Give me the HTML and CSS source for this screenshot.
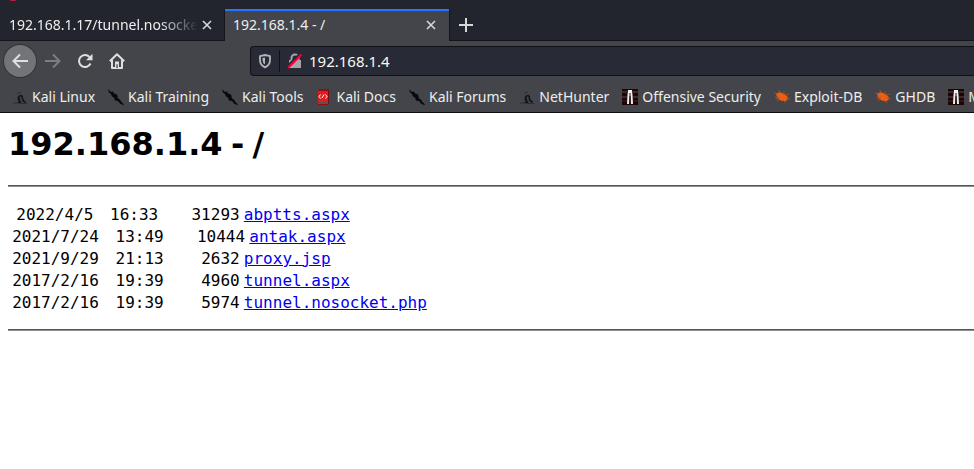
FILE: index.html
```html
<!DOCTYPE html>
<html lang="en">
<head>
<meta charset="utf-8">
<title>192.168.1.4 - /</title>
<link rel="stylesheet" href="styles.css">
</head>
<body>
<svg class="defs" aria-hidden="true">
  <symbol id="close" viewBox="0 0 10 10"><path d="M1 1l8 8M9 1L1 9" fill="none" stroke="#d6d7d9" stroke-width="1.6"/></symbol>
  <symbol id="kali" viewBox="0 0 16 16">
    <path d="M4 14q2-1 3-1c-2-2-2-5 0-6.500q3-2 4 1 0 4 3 5l-.5 1.500q-4-1-4-5.500-.5-2-1.500-.5-1 2 1.500 5.500l-1 1z" fill="#121417"/>
    <path d="M5 5q2-2 4-2M1 15q2-1.500 4-1.500M9 14.500h6" fill="none" stroke="#2b2d31" stroke-width="1"/>
  </symbol>
  <symbol id="blade" viewBox="0 0 16 16">
    <path d="M0 0l3 3 2-.5 1 2 3 1 1 4 2 1 1 2 3 3-1 .5-3-1.500-2-2.500-3-.5-1-3-2-1-1-2.500-2-1.500z" fill="#08090a"/>
  </symbol>
  <symbol id="docs" viewBox="0 0 16 16">
    <path d="M2 2l1-2h10v13l-1 3H2z" fill="#8d1113"/><path d="M2 2h10v11H2z" fill="#e41b1c"/><path d="M2 14l1-1h9v2H2z" fill="#555"/><path d="M13 0v13l-1 3V2z" fill="#701014"/>
    <path d="M4.500 5.500L3 7.500l1.500 2M9.500 5.500l1.500 2-1.500 2M6 9l2-3.500" fill="none" stroke="#fff"/>
  </symbol>
  <symbol id="offsec" viewBox="0 0 16 16">
    <path d="M0 0h16v16H0z" fill="#1b0507"/><path d="M0 3h5M11 3h5M0 8h5M11 8h5" stroke="#5b4c4e" stroke-width="1"/><path d="M0 12h5M11 12h5" stroke="#3b0d12" stroke-width="2"/>
    <path d="M6 1h4l.5 5 .5 9H9l-.5-8h-1L7 15H5l.500-9z" fill="#eee"/><path d="M7.500 4h1v11h-1z" fill="#201315"/>
  </symbol>
  <symbol id="bug" viewBox="0 0 16 16">
    <path d="M2 5q3-3 6-1 5 2 6 5-1 4-5 3Q4 12 2 5z" fill="#ec5f12"/><path d="M0 4l4 1M1 8l4 1M3 12l3-2M5 1l1 3M10 2v4M11 6l4-1M12 9l4 1M9 11l3 3M2 10l4-2" fill="none" stroke="#ad5125" stroke-width=".8"/>
  </symbol>
</svg>

<header class="chrome">
  <div class="tabstrip">
    <div class="tab">
      <button class="tab-title fade" type="button">192.168.1.17/tunnel.nosocket</button>
      <button class="close" type="button" aria-label="Close tab"><svg width="10" height="10"><use href="#close"/></svg></button>
    </div>
    <div class="tab active">
      <button class="tab-title" type="button">192.168.1.4 - /</button>
      <button class="close" type="button" aria-label="Close tab"><svg width="10" height="10"><use href="#close"/></svg></button>
    </div>
    <button class="newtab" type="button" aria-label="New tab"><svg width="14" height="14" viewBox="0 0 14 14"><path d="M7 0v14M0 7h14" stroke="#d6d7d9" stroke-width="2"/></svg></button>
    <svg class="notch" width="8" height="2" viewBox="0 0 8 2"><ellipse cx="4" cy="-1" rx="4" ry="2" fill="#c51f45"/></svg>
  </div>

  <div class="toolbar">
    <button class="tool back" type="button" aria-label="Back"><svg width="16" height="16" viewBox="0 0 16 16"><path d="M16 8H1.500M8 1.500L1.500 8 8 14.500" fill="none" stroke="#dedfe0" stroke-width="2"/></svg></button>
    <button class="tool" type="button" aria-label="Forward" disabled><svg width="16" height="16" viewBox="0 0 16 16"><path d="M0 8h14.500M8 1.500L14.500 8 8 14.500" fill="none" stroke="#7b7d81" stroke-width="2"/></svg></button>
    <button class="tool" type="button" aria-label="Reload"><svg width="16" height="16" viewBox="0 0 16 16"><path d="M12.500 4A6 6 0 1 0 13.500 10.500" fill="none" stroke="#dedfe0" stroke-width="2"/><path d="M15.500.8v6.400H9z" fill="#dedfe0"/></svg></button>
    <button class="tool" type="button" aria-label="Home"><svg width="16" height="16" viewBox="0 0 16 16"><path d="M.8 8.300L8 1.200l7.200 7.100M3 7v8h10V7" fill="none" stroke="#dedfe0" stroke-width="2" stroke-linejoin="round"/><path d="M6 8.500h4V14H6z" fill="#dedfe0"/><path d="M7.400 11.300h1.300V15H7.400z" fill="#43454b"/></svg></button>
    <div class="urlbar">
      <svg width="14" height="16" viewBox="0 0 14 16"><path d="M7 2L12 3.200V7c0 3.600-2 6-5 7.300C4 13 2 10.600 2 7V3.200z" fill="none" stroke="#b3b4b8" stroke-width="1.800" stroke-linejoin="round"/><path d="M7 4.500v7Q4.500 10 4.500 7V5z" fill="#b3b4b8"/></svg>
      <span class="divider"></span>
      <svg width="16" height="16" viewBox="0 0 16 16"><path d="M2 7h12v8H2z" fill="#a5a6aa"/><path d="M4.500 8V5a3.500 3.500 0 0 1 7 0v3" fill="none" stroke="#a5a6aa" stroke-width="2"/><path d="M.5 13L13 .5" stroke="#282a36" stroke-width="2"/><path d="M1 15L14.500 1.500" stroke="#f5003d" stroke-width="2"/></svg>
      <input type="text" value="192.168.1.4" aria-label="Address" spellcheck="false">
    </div>
  </div>

  <nav class="bookmarks" aria-label="Bookmarks">
    <a href="#"><svg><use href="#kali"/></svg>Kali Linux</a>
    <a href="#"><svg><use href="#blade"/></svg>Kali Training</a>
    <a href="#"><svg><use href="#blade"/></svg>Kali Tools</a>
    <a href="#"><svg><use href="#docs"/></svg>Kali Docs</a>
    <a href="#"><svg><use href="#blade"/></svg>Kali Forums</a>
    <a href="#"><svg><use href="#kali"/></svg>NetHunter</a>
    <a href="#"><svg><use href="#offsec"/></svg>Offensive Security</a>
    <a href="#"><svg><use href="#bug"/></svg>Exploit-DB</a>
    <a href="#"><svg><use href="#bug"/></svg>GHDB</a>
    <a href="#"><svg><use href="#offsec"/></svg>M</a>
  </nav>
</header>

<main>
<h1>192.168.1.4<i> </i>-<i> </i>/</h1>
<hr>
<pre><i>  </i>2022/4/5<i>    </i>16:33<i>        </i>31293<i> </i><a href="#">abptts.aspx</a>
<i> </i>2021/7/24<i>    </i>13:49<i>        </i>10444<i> </i><a href="#">antak.aspx</a>
<i> </i>2021/9/29<i>    </i>21:13<i>         </i>2632<i> </i><a href="#">proxy.jsp</a>
<i> </i>2017/2/16<i>    </i>19:39<i>         </i>4960<i> </i><a href="#">tunnel.aspx</a>
<i> </i>2017/2/16<i>    </i>19:39<i>         </i>5974<i> </i><a href="#">tunnel.nosocket.php</a></pre>
<hr>
</main>
</body>
</html>
```
FILE: styles.css
```css
* { box-sizing: border-box; }
body { margin: 0; background: #fff; color: #000; font-family: "DejaVu Sans", sans-serif; overflow: hidden; }
button { border: 0; padding: 0; background: none; color: inherit; font: inherit; display: flex; align-items: center; justify-content: center; }
svg { flex: none; display: block; }
.defs { position: absolute; width: 0; height: 0; }

.chrome { background: #43454b; color: #eeeeec; font: 14px/20px "Noto Sans", sans-serif; border-bottom: 1px solid #0c0c0e; }
.tabstrip { position: relative; display: flex; height: 41px; padding: 9px 0 0 1px; background: #23252e; box-shadow: inset 0 -1px #15161b; }
.notch { position: absolute; left: 9px; top: 0; }
.tab { display: flex; align-items: center; width: 224px; padding: 0 13px 0 8px; }
.tab-title { flex: 1; min-width: 0; overflow: hidden; white-space: nowrap; justify-content: flex-start; }
.fade { -webkit-mask-image: linear-gradient(to right, #000 150px, transparent 190px); mask-image: linear-gradient(to right, #000 150px, transparent 190px); }
.close { width: 10px; height: 20px; margin-left: 6px; }
.tab.active { background: #43454b; border-top: 2px solid #2475ff; box-shadow: -1px 0 #15161b, 1px 0 #15161b; padding-bottom: 2px; }
.newtab { width: 34px; }

.toolbar { display: flex; align-items: center; height: 40px; padding-left: 4px; }
.tool { width: 32px; height: 32px; }
.back { margin-right: 1px; border-radius: 50%; background: #737478; box-shadow: 0 0 0 1px #323439; }
.urlbar { display: flex; align-items: center; flex: 1; height: 30px; margin-left: 117px; padding-left: 7px; background: #282a36; border: 1px solid #101116; border-right: 0; border-radius: 4px 0 0 4px; }
.divider { width: 1px; height: 22px; margin: 0 7px; background: #101116; }
.urlbar input { flex: 1; min-width: 0; margin-left: 6px; padding: 0; border: 0; outline: 0; background: none; color: #f8f8f2; font: 15px/20px "Noto Sans", sans-serif; }

.bookmarks { display: flex; gap: 13px; align-items: center; height: 31px; padding-left: 12px; white-space: nowrap; overflow: hidden; }
.bookmarks a { display: flex; flex: none; align-items: center; gap: 4px; color: inherit; text-decoration: none; }
.bookmarks svg { width: 16px; height: 16px; }

main { padding: 12px 0 0 8px; }
h1 { margin: 0 0 22px; font-size: 32px; line-height: 38px; }
hr { height: 2px; margin: 0; border: 0; border-top: 1px solid #555; background: #8e8e8e; }
pre { margin: 17px 0 15px; font: 16px/22px "DejaVu Sans Mono", monospace; }
h1 i, pre i { font-family: "Noto Sans", sans-serif; font-style: normal; line-height: 1px; }
pre a { color: #0000ee; }
```
